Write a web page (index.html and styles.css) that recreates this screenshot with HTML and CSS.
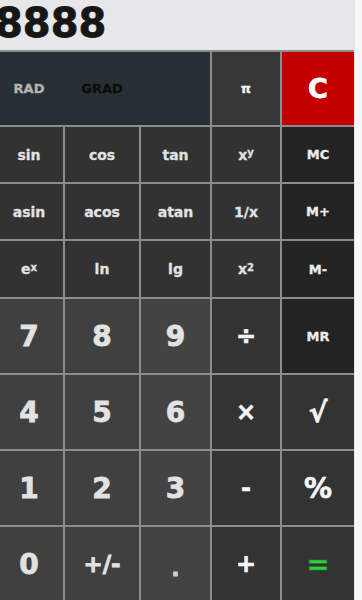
FILE: index.html
```html
<!DOCTYPE html>
<html lang="en">
<head>
    <meta charset="UTF-8">
    <meta name="viewport" content="width=device-width, initial-scale=1.0">
    <title>Calculator</title>
    <link rel="stylesheet" href="styles.css">
</head>
<body>
    <div class="calc">
        <div class="display"><span class="value">8888</span></div>
        <div class="keys">
            <div class="mode">
                <span class="rad">RAD</span>
                <span class="grad">GRAD</span>
            </div>
            <div class="key op small">π</div>
            <div class="key clear">C</div>

            <div class="key fn">sin</div>
            <div class="key fn">cos</div>
            <div class="key fn">tan</div>
            <div class="key fn">x<sup>y</sup></div>
            <div class="key mem">MC</div>

            <div class="key fn">asin</div>
            <div class="key fn">acos</div>
            <div class="key fn">atan</div>
            <div class="key fn">1/x</div>
            <div class="key mem">M+</div>

            <div class="key fn">e<sup>x</sup></div>
            <div class="key fn">ln</div>
            <div class="key fn">lg</div>
            <div class="key fn">x<sup>2</sup></div>
            <div class="key mem">M-</div>

            <div class="key num">7</div>
            <div class="key num">8</div>
            <div class="key num">9</div>
            <div class="key op sign">÷</div>
            <div class="key mem">MR</div>

            <div class="key num">4</div>
            <div class="key num">5</div>
            <div class="key num">6</div>
            <div class="key op sign">×</div>
            <div class="key op big">√</div>

            <div class="key num">1</div>
            <div class="key num">2</div>
            <div class="key num">3</div>
            <div class="key op sign">-</div>
            <div class="key op big">%</div>

            <div class="key num">0</div>
            <div class="key num pm">+/-</div>
            <div class="key num dot">.</div>
            <div class="key op sign">+</div>
            <div class="key op equals">=</div>
        </div>
    </div>
</body>
</html>
```

FILE: styles.css
```css
body {
    margin: 0;
    background: #f8f8f8;
    font-family: "DejaVu Sans", "Liberation Sans", sans-serif;
    font-weight: bold;
    overflow: hidden;
}
.calc {
    width: 354px;
    height: 600px;
    overflow: hidden;
    border-right: 1px solid #e4e4e4;
}
.display {
    width: 354px;
    height: 50px;
    background: #e7e7e9;
    overflow: hidden;
    box-shadow: 0 1px 2px rgba(0,0,0,0.3);
}
.value {
    display: block;
    margin-left: -5px;
    font-size: 40px;
    line-height: 46px;
    color: #161616;
    -webkit-text-stroke: 0.8px #161616;
}
.keys {
    width: 354px;
    display: grid;
    grid-template-columns: 63px 74px 69px 68px 72px;
    grid-template-rows: 73px 55px 55px 56px 74px 74px 74px 74px;
    gap: 2px;
    padding-top: 2px;
    background: #8c8c8c;
}
.mode {
    grid-column: span 3;
    display: grid;
    grid-template-columns: 58px 88px 1fr;
    align-items: center;
    background: #263034;
    font-size: 13px;
}
.mode span {
    text-align: center;
    -webkit-text-stroke: 0.3px currentColor;
}
.rad {
    color: #b4b4b4;
}
.grad {
    color: #0c0c0c;
}
.key {
    display: flex;
    align-items: center;
    justify-content: center;
    color: #e2e2e2;
    font-size: 14px;
    -webkit-text-stroke: 0.3px currentColor;
}
.keys > .key:nth-child(5n+4) {
    padding-right: 5px;
}
.key sup {
    font-size: 10px;
    position: relative;
    top: -2px;
}
.fn {
    background: #323232;
}
.mem {
    background: #232323;
    color: #ececec;
    font-size: 13px;
}
.num {
    background: #404040;
    font-size: 28px;
    -webkit-text-stroke: 0.8px currentColor;
}
.num:nth-child(5n+1) {
    background: #434343;
}
.op {
    background: #333333;
    color: #f4f4f4;
}
.small {
    background: #363636;
    font-size: 13px;
}
.sign {
    font-size: 24px;
    -webkit-text-stroke: 0.6px currentColor;
}
.big {
    font-size: 28px;
    -webkit-text-stroke: 0.6px currentColor;
}
.pm {
    font-size: 23px;
}
.dot {
    font-size: 22px;
    padding-top: 8px;
    color: #cfcfcf;
}
.equals {
    color: #2ecf3e;
    font-size: 28px;
    -webkit-text-stroke: 0.6px #1c8a26;
}
.clear {
    background: #c20000;
    color: #ffffff;
    font-size: 27px;
    -webkit-text-stroke: 0.8px #ffffff;
}
```
